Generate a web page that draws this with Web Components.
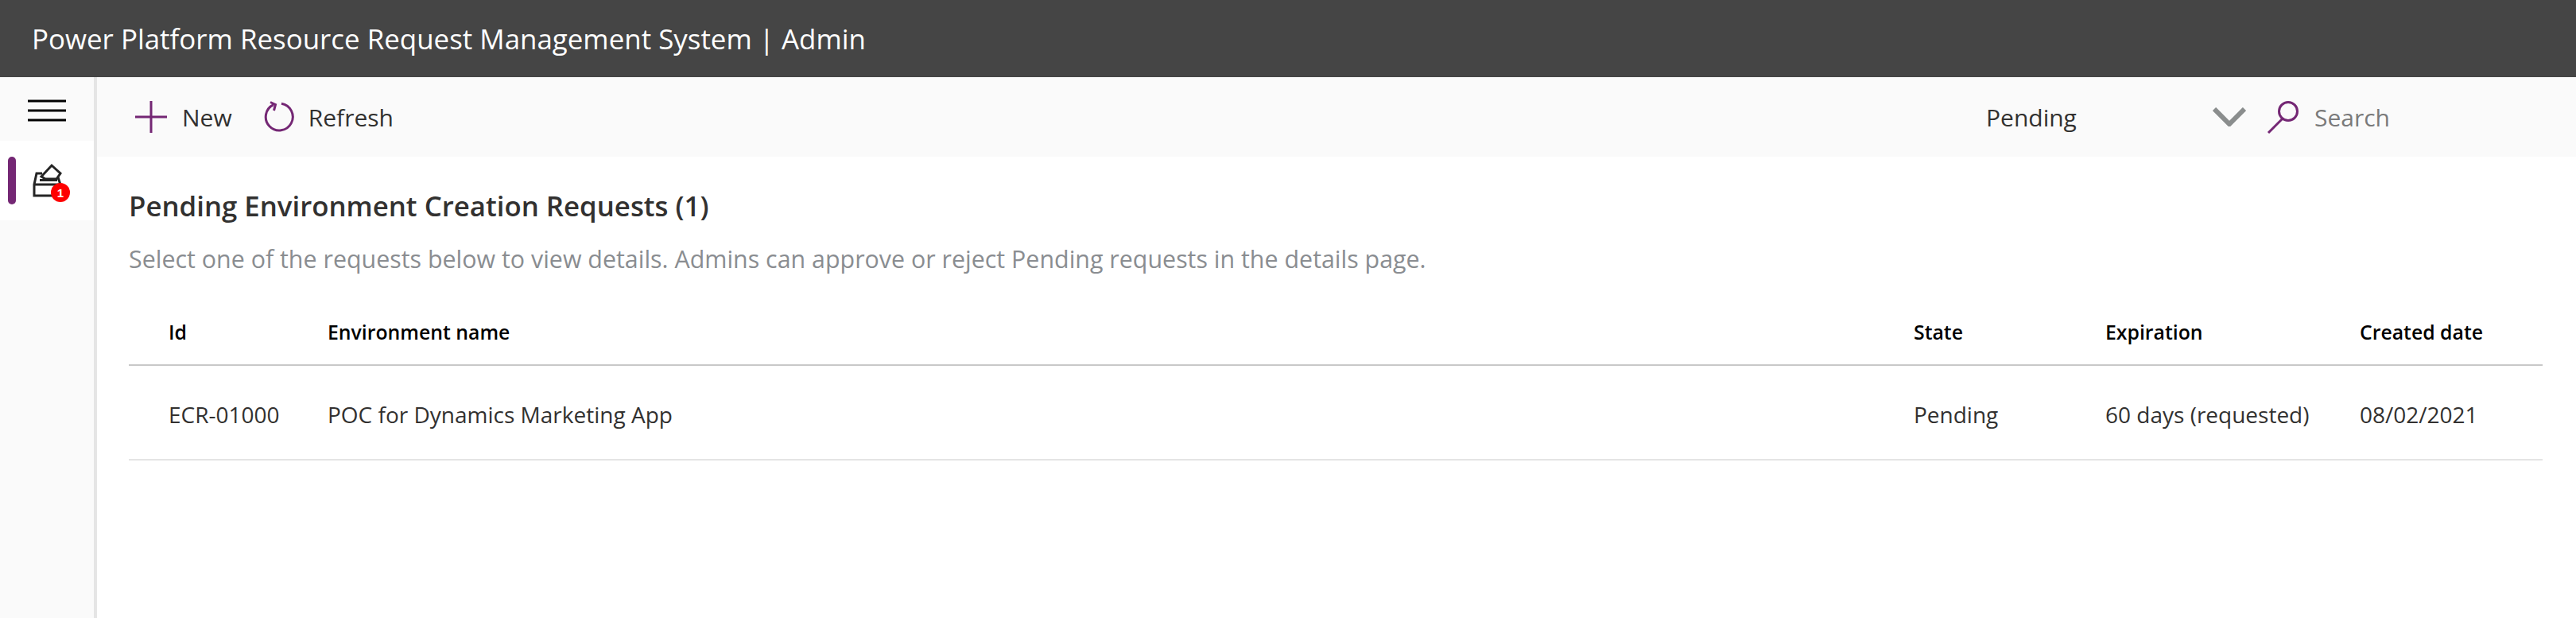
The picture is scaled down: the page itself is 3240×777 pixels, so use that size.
<!DOCTYPE html>
<html lang="en"><head><meta charset="utf-8"><title>Admin</title>
<style>
html,body{margin:0;height:100%;overflow:hidden;background:#fff}
body{font-family:"Open Sans","Noto Sans",sans-serif;color:#323130}
pp-app{height:777px}
</style></head><body>
<pp-app>
  <pp-header slot="header">Power Platform Resource Request Management System | Admin</pp-header>
  <pp-sidebar slot="sidebar"></pp-sidebar>
  <pp-toolbar slot="toolbar"></pp-toolbar>
  <pp-content slot="content">
    <span slot="title">Pending Environment Creation Requests (1)</span>
    <span slot="sub">Select one of the requests below to view details. Admins can approve or reject Pending requests in the details page.</span>
    <pp-table slot="table"></pp-table>
  </pp-content>
</pp-app>
<script>
function def(name, html){
  customElements.define(name, class extends HTMLElement{
    constructor(){super();this.attachShadow({mode:'open'}).innerHTML=html;}
  });
}
def('pp-app',`<style>
:host{display:grid;grid-template-columns:122px 1fr;grid-template-rows:97px 1fr}
.h{grid-column:1/3}.s{min-height:0}.m{display:flex;flex-direction:column;min-width:0}
</style>
<div class="h"><slot name="header"></slot></div>
<div class="s"><slot name="sidebar"></slot></div>
<div class="m"><slot name="toolbar"></slot><slot name="content"></slot></div>`);
def('pp-header',`<style>
:host{display:flex;align-items:center;height:97px;box-sizing:border-box;padding:0 0 0 40px;background:#454545;color:#fff;font-size:34.9px}
</style><slot></slot>`);
def('pp-sidebar',`<style>
:host{display:flex;flex-direction:column;height:680px;box-sizing:border-box;background:#fafafa;border-right:4px solid #e5e5e5}
.burger{height:80px;box-sizing:border-box;padding-top:3px;display:flex;align-items:center;justify-content:center}
.item{height:100px;background:#fff;display:flex;align-items:center;padding-left:10px}
.bar{width:10px;height:60px;border-radius:5px;background:#742774}
svg{display:block}
</style>
<div class="burger"><svg width="48" height="30" viewBox="0 0 48 30"><path d="M0 3h48M0 15h48M0 27h48" stroke="#000" stroke-width="3"/></svg></div>
<div class="item"><div class="bar"></div>
<svg width="60" height="60" viewBox="0 0 60 60" style="margin-left:11px;margin-top:16px" aria-hidden="true">
<g fill="none" stroke="#252525" stroke-width="3" stroke-linejoin="miter">
<path d="M22 13H15L12 27V41H36M12 27H45M41 15L45 27V34"/>
<path d="M21 17L34 3L45 13L40 20H26Z" fill="#fff"/>
<path d="M19 21.500H41"/>
</g>
<circle cx="45" cy="37" r="12" fill="#fe0000"/>
<text x="45" y="43" text-anchor="middle" font-family="Liberation Sans" font-weight="700" font-size="15" fill="#fff">1</text>
</svg></div>`);
def('pp-toolbar',`<style>
:host{display:flex;align-items:center;height:100px;background:#fafafa;font-size:30px;color:#323130}
svg{display:block;flex:none}
.b{display:flex;align-items:center}
.new{margin-left:48px}.ref{margin-left:39px}
.new span{margin-left:19px}.ref span{margin-left:17px}
.sel{margin-left:auto;width:285px;display:block}
.chev{margin-right:26px}
.srch{display:flex;align-items:center;width:389px}
.srch span{color:#7a7a7a;margin-left:18px}
</style>
<div class="b new"><svg width="40" height="40" viewBox="0 0 40 40"><path d="M0 20h40M20 0v40" stroke="#742774" stroke-width="3"/></svg><span>New</span></div>
<div class="b ref"><svg width="40" height="40" viewBox="0 0 40 40"><path d="M13 4.600A17 17 0 1 0 23 3.200" fill="none" stroke="#742774" stroke-width="3"/><path d="M9 1.500L15.500 4.500L13.500 12" fill="none" stroke="#742774" stroke-width="3"/></svg><span>Refresh</span></div>
<span class="sel">Pending</span>
<svg class="chev" width="42" height="24" viewBox="0 0 42 24"><path d="M2 2L21 21L40 2" fill="none" stroke="#8a8d8d" stroke-width="6"/></svg>
<div class="srch"><svg width="42" height="42" viewBox="0 0 42 42"><circle cx="27" cy="14" r="11.500" fill="none" stroke="#742774" stroke-width="3"/><path d="M20 23L2 41" stroke="#742774" stroke-width="3" fill="none"/></svg><span>Search</span></div>`);
def('pp-content',`<style>
:host{display:block;padding:39px 42px 0 40px}
.t{font-size:34.8px;font-weight:600;color:#323130;line-height:46px}
.s{font-size:30.4px;color:#8a8d91;line-height:40px;margin-top:24px}
.tb{margin-top:30px}
</style>
<div class="t"><slot name="title"></slot></div>
<div class="s"><slot name="sub"></slot></div>
<div class="tb"><slot name="table"></slot></div>`);
def('pp-table',`<style>
:host{display:block;font-size:24.8px}
.r{display:grid;grid-template-columns:250px 1995px 241px 320px 230px;box-sizing:border-box;align-items:center}
.r>div:first-child{padding-left:50px}
.hd{height:84px;border-bottom:2px solid #c8c8c8;font-weight:600;color:#000}
.bd{height:119px;padding-top:5px;border-bottom:2px solid #e4e4e4;font-size:28px;color:#323130}
</style>
<div class="r hd" role="row"><div>Id</div><div>Environment name</div><div>State</div><div>Expiration</div><div>Created date</div></div>
<div class="r bd" role="row"><div>ECR-01000</div><div>POC for Dynamics Marketing App</div><div>Pending</div><div>60 days (requested)</div><div>08/02/2021</div></div>`);
</script>
</body></html>
